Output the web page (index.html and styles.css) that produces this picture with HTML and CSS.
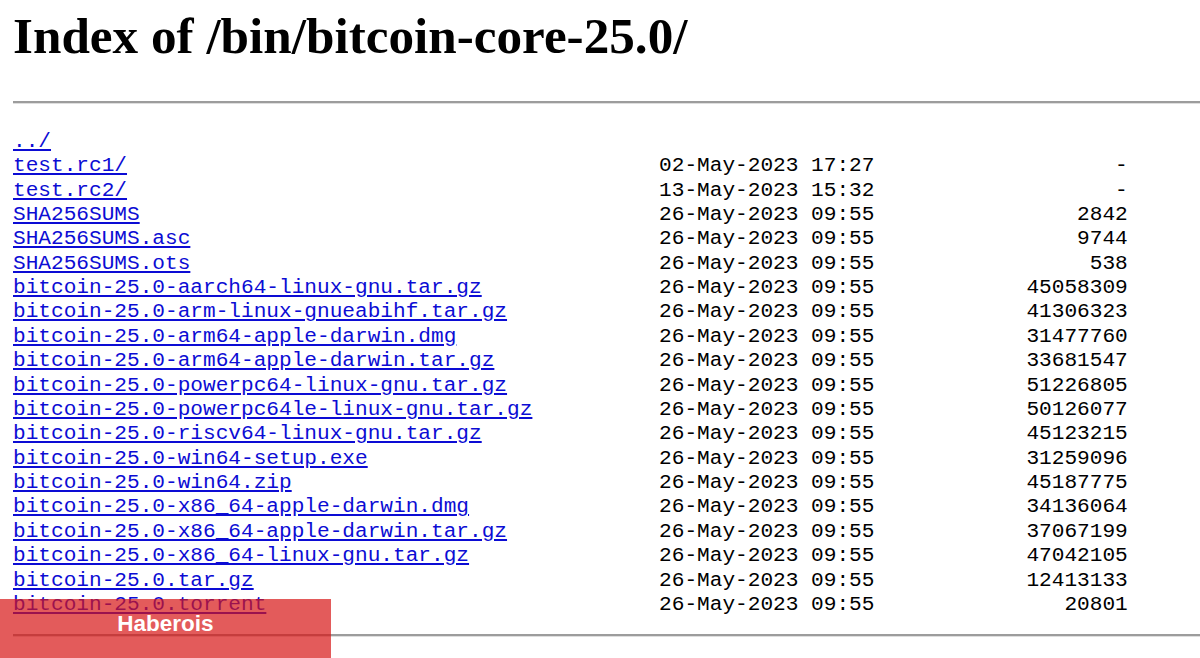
FILE: index.html
```html
<!DOCTYPE html>
<html>
<head>
<meta charset="utf-8">
<title>Index of /bin/bitcoin-core-25.0/</title>
<link rel="stylesheet" href="styles.css">
</head>
<body>
<h1 class="title">Index of /bin/bitcoin-core-25.0/</h1>
<hr class="rule">
<div class="listing">
  <div class="row"><a class="name" href="../">../</a><span class="date"></span><span class="size"></span></div>
  <div class="row"><a class="name" href="test.rc1/">test.rc1/</a><span class="date">02-May-2023 17:27</span><span class="size">-</span></div>
  <div class="row"><a class="name" href="test.rc2/">test.rc2/</a><span class="date">13-May-2023 15:32</span><span class="size">-</span></div>
  <div class="row"><a class="name" href="SHA256SUMS">SHA256SUMS</a><span class="date">26-May-2023 09:55</span><span class="size">2842</span></div>
  <div class="row"><a class="name" href="SHA256SUMS.asc">SHA256SUMS.asc</a><span class="date">26-May-2023 09:55</span><span class="size">9744</span></div>
  <div class="row"><a class="name" href="SHA256SUMS.ots">SHA256SUMS.ots</a><span class="date">26-May-2023 09:55</span><span class="size">538</span></div>
  <div class="row"><a class="name" href="#">bitcoin-25.0-aarch64-linux-gnu.tar.gz</a><span class="date">26-May-2023 09:55</span><span class="size">45058309</span></div>
  <div class="row"><a class="name" href="#">bitcoin-25.0-arm-linux-gnueabihf.tar.gz</a><span class="date">26-May-2023 09:55</span><span class="size">41306323</span></div>
  <div class="row"><a class="name" href="#">bitcoin-25.0-arm64-apple-darwin.dmg</a><span class="date">26-May-2023 09:55</span><span class="size">31477760</span></div>
  <div class="row"><a class="name" href="#">bitcoin-25.0-arm64-apple-darwin.tar.gz</a><span class="date">26-May-2023 09:55</span><span class="size">33681547</span></div>
  <div class="row"><a class="name" href="#">bitcoin-25.0-powerpc64-linux-gnu.tar.gz</a><span class="date">26-May-2023 09:55</span><span class="size">51226805</span></div>
  <div class="row"><a class="name" href="#">bitcoin-25.0-powerpc64le-linux-gnu.tar.gz</a><span class="date">26-May-2023 09:55</span><span class="size">50126077</span></div>
  <div class="row"><a class="name" href="#">bitcoin-25.0-riscv64-linux-gnu.tar.gz</a><span class="date">26-May-2023 09:55</span><span class="size">45123215</span></div>
  <div class="row"><a class="name" href="#">bitcoin-25.0-win64-setup.exe</a><span class="date">26-May-2023 09:55</span><span class="size">31259096</span></div>
  <div class="row"><a class="name" href="#">bitcoin-25.0-win64.zip</a><span class="date">26-May-2023 09:55</span><span class="size">45187775</span></div>
  <div class="row"><a class="name" href="#">bitcoin-25.0-x86_64-apple-darwin.dmg</a><span class="date">26-May-2023 09:55</span><span class="size">34136064</span></div>
  <div class="row"><a class="name" href="#">bitcoin-25.0-x86_64-apple-darwin.tar.gz</a><span class="date">26-May-2023 09:55</span><span class="size">37067199</span></div>
  <div class="row"><a class="name" href="#">bitcoin-25.0-x86_64-linux-gnu.tar.gz</a><span class="date">26-May-2023 09:55</span><span class="size">47042105</span></div>
  <div class="row"><a class="name" href="#">bitcoin-25.0.tar.gz</a><span class="date">26-May-2023 09:55</span><span class="size">12413133</span></div>
  <div class="row"><a class="name" href="#">bitcoin-25.0.torrent</a><span class="date">26-May-2023 09:55</span><span class="size">20801</span></div>
</div>
<hr class="rule">
<div class="banner">Haberois</div>
</body>
</html>
```

FILE: styles.css
```css
html, body {
  height: 100%;
}
body {
  margin: 0;
  padding: 0 0 0 13px;
  background: #ffffff;
  color: #000000;
  overflow: hidden;
}
.title {
  margin: 6px 0 35px;
  font-family: "Liberation Serif", "Times New Roman", serif;
  font-weight: 700;
  font-size: 51.2px;
  line-height: 59.8px;
}
.rule {
  margin: 0;
  height: 0;
  border: 0;
  border-top: 2px solid #9c9c9c;
  border-bottom: 1px solid #dedede;
}
.listing {
  margin: 25px 0 18px;
  font-family: "Liberation Mono", "Courier New", monospace;
  font-size: 21.125px;
  line-height: 24.375px;
}
.row {
  display: grid;
  grid-template-columns: 51ch 17ch 20ch;
  height: 24.375px;
  white-space: nowrap;
}
.name {
  color: #0c0cd4;
  text-decoration: underline;
  justify-self: start;
}
.size {
  text-align: right;
}
.banner {
  position: absolute;
  left: 0;
  top: 599px;
  width: 331px;
  height: 59px;
  box-sizing: border-box;
  padding-top: 12px;
  background: rgba(215, 22, 22, 0.7);
  color: #ffffff;
  font-family: "Liberation Sans", Arial, sans-serif;
  font-weight: 700;
  font-size: 22.5px;
  line-height: 25px;
  text-align: center;
}
```
